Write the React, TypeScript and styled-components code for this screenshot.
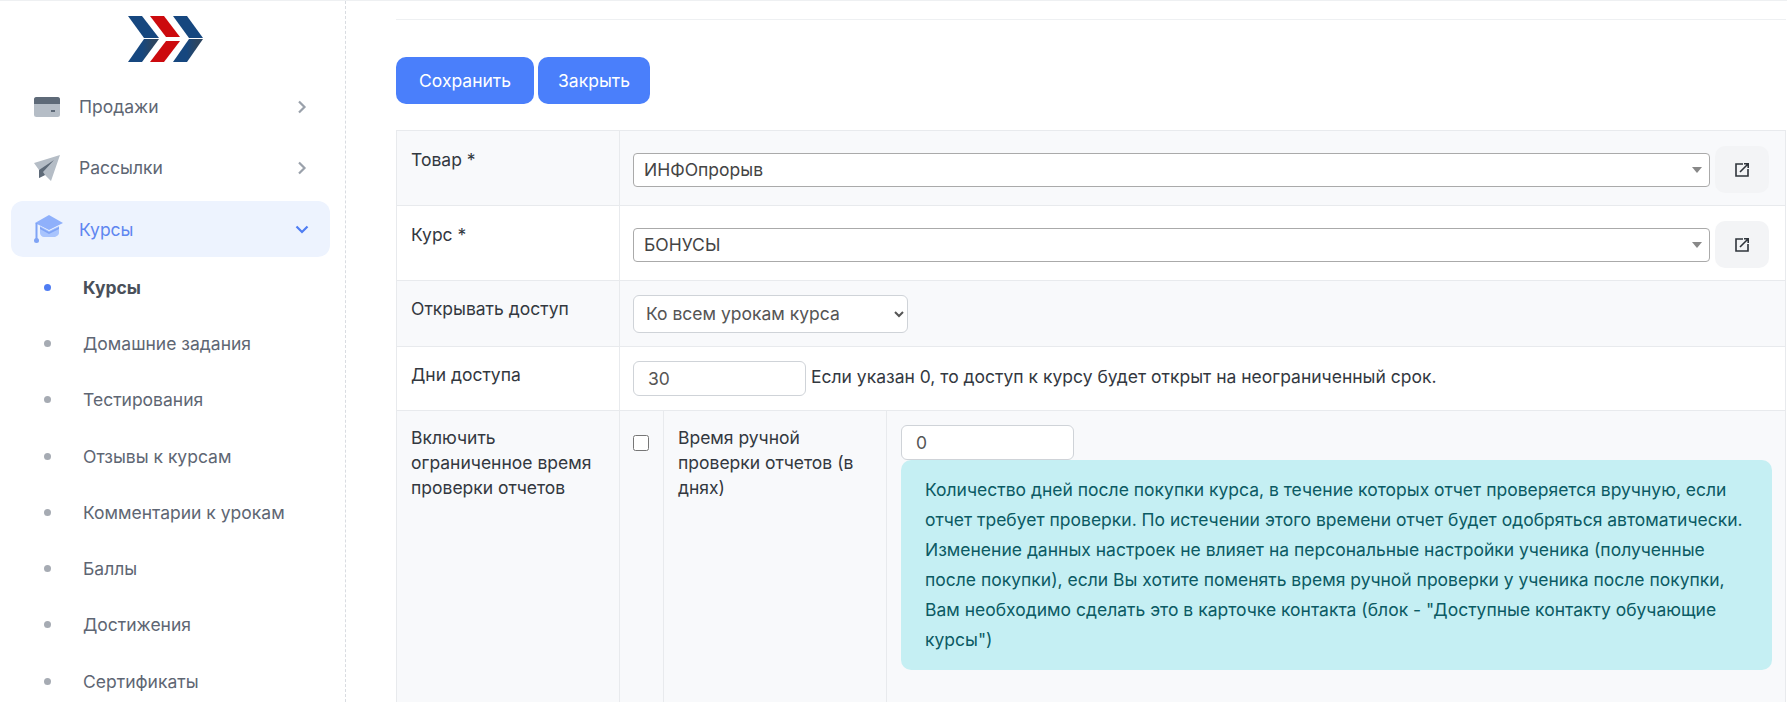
import styled, {createGlobalStyle} from 'styled-components'

const subItems = ['Курсы', 'Домашние задания', 'Тестирования', 'Отзывы к курсам', 'Комментарии к урокам', 'Баллы', 'Достижения', 'Сертификаты']

const Logo = () => (
  <svg width="76" height="46" viewBox="0 0 76 46">
    <defs>
      <linearGradient id="tip" x1="0" x2="1" y1="0" y2="0">
        <stop offset="0.45" stopColor="#16477f"/>
        <stop offset="0.8" stopColor="#2c4560"/>
      </linearGradient>
    </defs>
    <polygon points="0,0 14,0 31,22 16,22" fill="#16477f"/>
    <polygon points="16,23 31,23 14,46 0,46" fill="url(#tip)"/>
    <polygon points="22,0 36,0 52,21 38,21 " fill="#cc0a0e"/>
    <polygon points="38,25 52,25 36,46 22,46" fill="#cc0a0e"/>
    <polygon points="45,0 59,0 75,22 61,22" fill="#16477f"/>
    <polygon points="61,23 75,23 59,46 45,46" fill="url(#tip)"/>
  </svg>
)

const CardIcon = () => (
  <svg width="26" height="20" viewBox="0 0 26 20">
    <rect width="26" height="20" rx="2.5" fill="#b5bdc6"/>
    <path d="M2.5 0h21A2.5 2.5 0 0 1 26 2.5V7H0V2.5A2.5 2.5 0 0 1 2.5 0z" fill="#5e6a78"/>
    <rect x="17" y="13" width="4" height="2" fill="#5e6a78"/>
  </svg>
)

const PlaneIcon = () => (
  <svg width="26" height="26" viewBox="0 0 26 26">
    <polygon points="0,8 26,0 17,26 11,20 5,23 5,15" fill="#b5bdc6" strokeLinejoin="round"/>
    <polygon points="5,15 20,5 9,17 11,20 5,23" fill="#5e6a78"/>
  </svg>
)

const CapIcon = () => (
  <svg width="30" height="29" viewBox="0 0 30 29">
    <path d="M6 11v7c0 2 2 4 4 4h10c2 0 5-2 5-4v-7l-10 5z" fill="#a9c4fd"/>
    <path d="M6 12l9 5 10-5v2l-10 5-9-5z" fill="#7fa3f5"/>
    <path d="M1 8L15 0l14 8-14 7z" fill="#8fb0fb"/>
    <rect x="1.5" y="8" width="2" height="17" fill="#7fa3f5"/>
    <circle cx="2.5" cy="25.5" r="2.5" fill="#7fa3f5"/>
  </svg>
)

const Chevron = ({down}:{down?:boolean}) => (
  <svg width="14" height="14" viewBox="0 0 14 14" fill="none" stroke={down ? '#4f7df3' : '#9aa1ab'} strokeWidth="2.2">
    {down ? <path d="M1.5 4.5l5.5 5.5 5.5-5.5"/> : <path d="M4 1.5l5.5 5.5-5.5 5.5"/>}
  </svg>
)

const OpenIcon = () => (
  <svg width="14" height="14" viewBox="0 0 14 14" fill="none" stroke="#2f343b" strokeWidth="1.6">
    <path d="M8 1H1v12h12V6"/>
    <path d="M5 9L13 1M9 .8h4.2V5"/>
  </svg>
)

const SelectBox = ({value}:{value:string}) => (
  <Select2>
    {value}
    <Caret/>
  </Select2>
)

const App = () => {
  return (
    <Page>
      <GlobalStyle/>
      <Sidebar>
        <LogoHolder><Logo/></LogoHolder>
        <MenuItem>
          <IconBox><CardIcon/></IconBox>
          <MenuLabel>Продажи</MenuLabel>
          <Chevron/>
        </MenuItem>
        <MenuItem>
          <IconBox><PlaneIcon/></IconBox>
          <MenuLabel>Рассылки</MenuLabel>
          <Chevron/>
        </MenuItem>
        <MenuItem active>
          <IconBox><CapIcon/></IconBox>
          <ActiveLabel>Курсы</ActiveLabel>
          <Chevron down/>
        </MenuItem>
        <SubList>
          {subItems.map((item, i) => (
            <SubItem key={item} active={i === 0}>
              <Dot active={i === 0}/>
              {item}
            </SubItem>
          ))}
        </SubList>
      </Sidebar>

      <Main>
        <TopLine/>
        <Buttons>
          <Button pad={23}>Сохранить</Button>
          <Button pad={20}>Закрыть</Button>
        </Buttons>

        <Form>
          <tbody>
            <Row>
              <LabelCell top={16}>Товар *</LabelCell>
              <FieldCell>
                <SelectRow>
                  <SelectBox value="ИНФОпрорыв"/>
                  <OpenButton><OpenIcon/></OpenButton>
                </SelectRow>
              </FieldCell>
            </Row>
            <Row>
              <LabelCell top={16}>Курс *</LabelCell>
              <FieldCell>
                <SelectRow>
                  <SelectBox value="БОНУСЫ"/>
                  <OpenButton><OpenIcon/></OpenButton>
                </SelectRow>
              </FieldCell>
            </Row>
            <Row>
              <LabelCell top={15}>Открывать доступ</LabelCell>
              <SmallCell>
                <NativeSelect defaultValue="all">
                  <option value="all">Ко всем урокам курса</option>
                </NativeSelect>
              </SmallCell>
            </Row>
            <Row>
              <LabelCell top={15}>Дни доступа</LabelCell>
              <SmallCell>
                <InlineField>
                  <NumberInput defaultValue="30"/>
                  <Hint>Если указан 0, то доступ к курсу будет открыт на неограниченный срок.</Hint>
                </InlineField>
              </SmallCell>
            </Row>
            <TallRow>
              <LabelCell top={14}>Включить ограниченное время проверки отчетов</LabelCell>
              <NestedCell>
                <Nested>
                  <CheckColumn><Check type="checkbox"/></CheckColumn>
                  <NestedLabel>Время ручной проверки отчетов (в днях)</NestedLabel>
                  <NestedField>
                    <NumberInput defaultValue="0"/>
                    <Alert>
                      Количество дней после покупки курса, в течение которых отчет проверяется вручную, если
                      отчет требует проверки. По истечении этого времени отчет будет одобряться автоматически.
                      Изменение данных настроек не влияет на персональные настройки ученика (полученные
                      после покупки), если Вы хотите поменять время ручной проверки у ученика после покупки,
                      Вам необходимо сделать это в карточке контакта (блок - "Доступные контакту обучающие
                      курсы")
                    </Alert>
                  </NestedField>
                </Nested>
              </NestedCell>
            </TallRow>
          </tbody>
        </Form>
      </Main>
    </Page>
  )
}

export default App;

const GlobalStyle = createGlobalStyle`
  * { box-sizing: border-box; }
  html, body { margin: 0; padding: 0; background: #fff; }
  body { font-family: Inter, "Liberation Sans", sans-serif; font-size: 17.5px; color: #33383f; }
`
const Page = styled.div`
  display: flex;
  height: 100vh;
  overflow: hidden;
  border-top: 1px solid #eef0f2;
`
const Sidebar = styled.aside`
  width: 346px;
  flex-shrink: 0;
  border-right: 1px dashed #d9dce1;
  padding: 15px 15px 0 11px;
  overflow: hidden;
`
const LogoHolder = styled.div`
  display: flex;
  padding-left: 117px;
  height: 63px;
`
const MenuItem = styled.div<{active?:boolean}>`
  display: flex;
  align-items: center;
  height: 56px;
  margin-bottom: ${({active})=>active ? '3px' : '5px'};
  padding: 0 21px 0 23px;
  border-radius: 12px;
  background-color: ${({active})=>active ? '#edf3fe' : 'transparent'};
  color: ${({active})=>active ? '#5f86f0' : '#5e6673'};
`
const IconBox = styled.div`
  width: 45px;
  display: flex;
  align-items: center;
`
const MenuLabel = styled.div`
  flex: 1;
  padding-bottom: 2px;
`
const ActiveLabel = styled.div`
  flex: 1;
`
const SubList = styled.div`
  display: flex;
  flex-direction: column;
`
const SubItem = styled.div<{active?:boolean}>`
  display: flex;
  align-items: center;
  height: 56.3px;
  padding: 0 0 2px 33px;
  font-weight: ${({active})=>active ? 700 : 400};
  color: ${({active})=>active ? '#4a505a' : '#5e6673'};
`
const Dot = styled.span<{active?:boolean}>`
  width: 7px;
  height: 7px;
  border-radius: 50%;
  margin-right: 32px;
  background-color: ${({active})=>active ? '#4f7df3' : '#a6abb3'};
`
const Main = styled.main`
  flex: 1;
  min-width: 0;
  padding: 0 1px 0 50px;
`
const TopLine = styled.div`
  height: 19px;
  border-bottom: 1px solid #eef0f2;
`
const Buttons = styled.div`
  display: flex;
  gap: 4px;
  margin-top: 37px;
`
const Button = styled.button<{pad:number}>`
  height: 47px;
  padding: 0 ${({pad})=>pad}px;
  border: none;
  border-radius: 10px;
  background-color: #4a7ffb;
  color: #fff;
  font-family: inherit;
  font-size: 17.5px;
`
const Form = styled.table`
  width: 100%;
  margin-top: 26px;
  border-collapse: collapse;
  table-layout: fixed;
`
const Row = styled.tr`
  &:nth-child(odd) { background-color: #f8f9fb; }
`
const TallRow = styled(Row)`
  height: 292px;
`
const LabelCell = styled.td<{top:number}>`
  width: 223px;
  vertical-align: top;
  padding: ${({top})=>top}px 14px 0;
  border: 1px solid #e8eaed;
  line-height: 25px;
  color: #33383f;
`
const FieldCell = styled.td`
  padding: 15px 16px 12px 13px;
  border: 1px solid #e8eaed;
`
const SmallCell = styled.td`
  padding: 14px 14px 14px 13px;
  border: 1px solid #e8eaed;
  vertical-align: top;
`
const SelectRow = styled.div`
  display: flex;
  align-items: center;
  gap: 5px;
`
const Select2 = styled.div`
  position: relative;
  flex: 1;
  height: 34px;
  padding-left: 10px;
  border: 1px solid #aaa;
  border-radius: 4px;
  background: #fff;
  line-height: 31px;
  color: #444;
`
const Caret = styled.span`
  position: absolute;
  right: 7px;
  top: 13px;
  border-style: solid;
  border-width: 6px 5px 0 5px;
  border-color: #888 transparent transparent transparent;
`
const OpenButton = styled.div`
  width: 54px;
  height: 47px;
  display: flex;
  align-items: center;
  justify-content: center;
  border-radius: 10px;
  background-color: #f3f4f6;
`
const NativeSelect = styled.select`
  display: block;
  width: 275px;
  height: 38px;
  margin-bottom: -1px;
  padding: 0 0 2px 8px;
  border: 1px solid #cfd3d8;
  border-radius: 6px;
  background-color: #fff;
  color: #555;
  font-family: inherit;
  font-size: 17.5px;
`
const InlineField = styled.div`
  display: flex;
  align-items: center;
  gap: 5px;
  color: #33383f;
`
const Hint = styled.span`
  padding-bottom: 4px;
`
const NumberInput = styled.input`
  display: block;
  width: 173px;
  height: 35px;
  padding: 0 14px;
  border: 1px solid #cfd3d8;
  border-radius: 6px;
  background-color: #fff;
  color: #555;
  font-family: inherit;
  font-size: 17.5px;
`
const NestedCell = styled.td`
  padding: 0;
  border: 1px solid #e8eaed;
  vertical-align: top;
  height: 292px;
`
const Nested = styled.div`
  display: grid;
  grid-template-columns: 44px 223px 1fr;
  height: 100%;
  min-height: 292px;
`
const CheckColumn = styled.div`
  padding: 24px 0 0 13px;
  border-right: 1px solid #e8eaed;
`
const Check = styled.input`
  display: block;
  width: 16px;
  height: 16px;
  margin: 0;
`
const NestedLabel = styled.div`
  padding: 14px 14px;
  border-right: 1px solid #e8eaed;
  line-height: 25px;
`
const NestedField = styled.div`
  padding: 14px 13px 0 14px;
`
const Alert = styled.div`
  height: 210px;
  padding: 15px 24px;
  border-radius: 10px;
  background-color: #c5eff3;
  color: #0b5a63;
  line-height: 30px;
`
